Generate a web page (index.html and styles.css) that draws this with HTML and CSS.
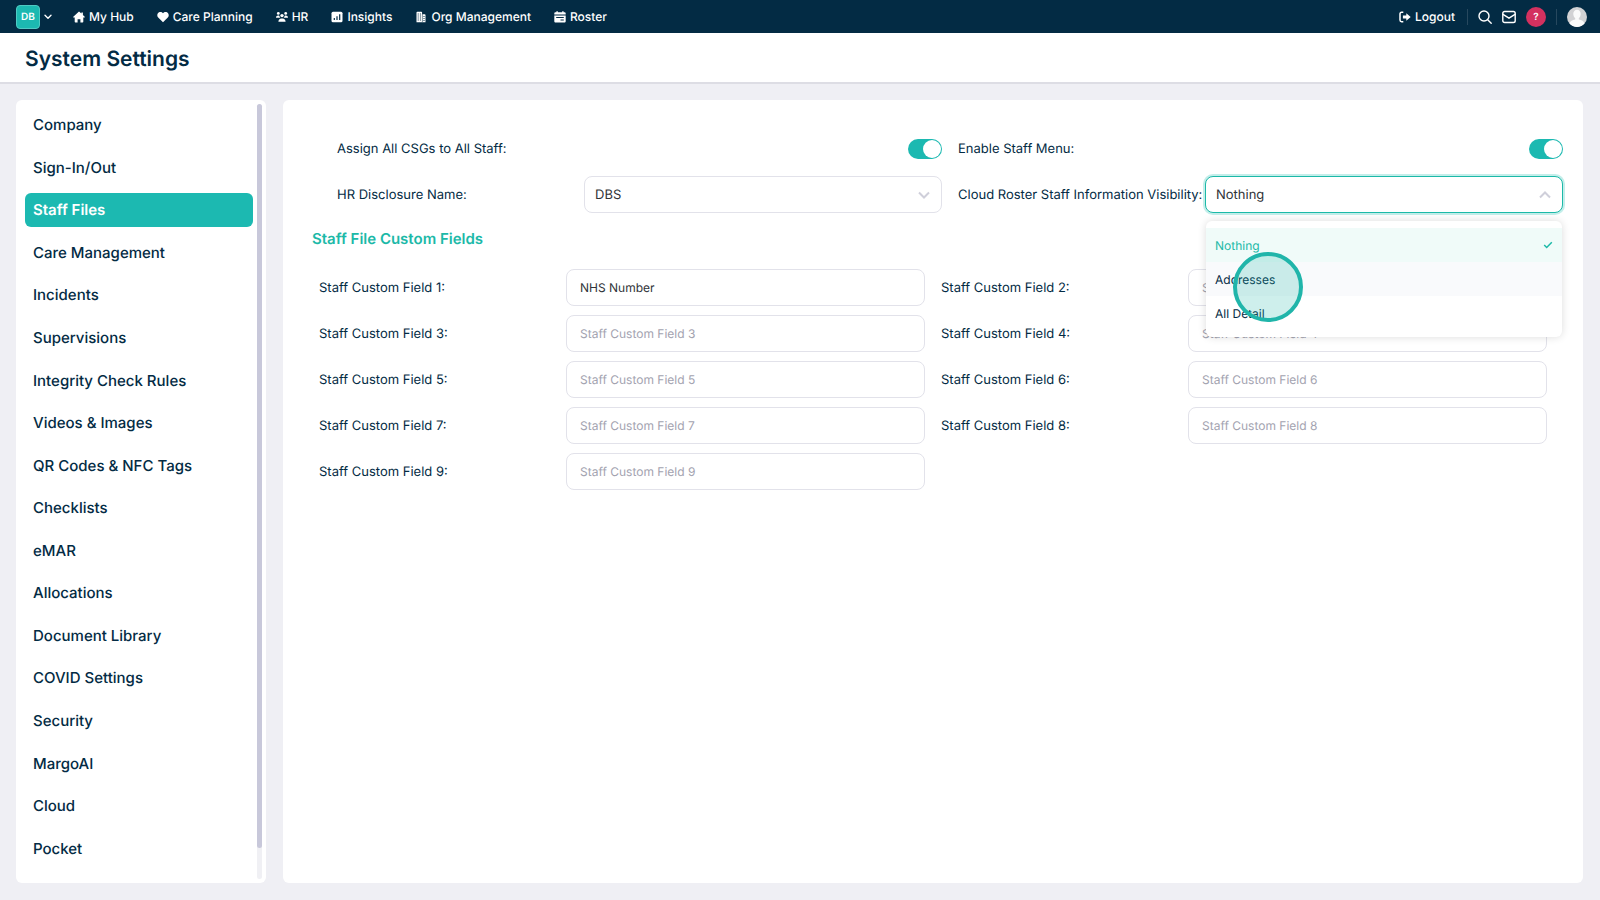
FILE: index.html
```html
<!DOCTYPE html>
<html lang="en">
<head>
    <meta charset="UTF-8">
    <meta name="viewport" content="width=device-width, initial-scale=1.0">
    <title>System Settings</title>
    <link rel="stylesheet" href="styles.css">
</head>
<body>
    <header class="topbar">
        <button type="button" class="org-switch" aria-label="Switch organisation">
            <span class="org-badge">DB</span>
            <svg width="8" height="6" viewBox="0 0 8 6" fill="none" stroke="currentColor" stroke-width="1.4" stroke-linecap="round" stroke-linejoin="round"><path d="M1 1.2l3 3 3-3"/></svg>
        </button>
        <nav class="topnav">
            <a href="#"><svg class="nav-icon" viewBox="0 0 12 12"><path d="M6 .4L.3 5.8c-.3.3-.1.8.3.8h1.1v4.2c0 .4.3.7.7.7h2.2V8.2h2.8v3.3h2.2c.4 0 .7-.3.7-.7V6.6h1.1c.4 0 .6-.5.3-.8L9.9 4V1.5H8.4v1.1z"/></svg>My Hub</a>
            <a href="#"><svg class="nav-icon" viewBox="0 0 12 12"><path d="M6 11.2L1.2 6.5C-.3 5 .1 2.3 1.7 1.4 3.2.5 5 .9 6 2.3 7 .9 8.8.5 10.3 1.4c1.6.9 2 3.6.5 5.1z"/></svg>Care Planning</a>
            <a href="#"><svg class="nav-icon" viewBox="0 0 12 12"><circle cx="2.3" cy="2.4" r="1.4"/><circle cx="9.7" cy="2.4" r="1.4"/><circle cx="6" cy="4.6" r="1.7"/><path d="M0 6.8c0-1.6 1-2.3 2.1-2.3.6 0 1 .1 1.4.4 0 .8.3 1.4.8 1.9zM12 6.8c0-1.6-1-2.3-2.1-2.3-.6 0-1 .1-1.4.4 0 .8-.3 1.4-.8 1.9zM2.4 10.8c0-2 1.3-3.3 2.8-3.3h1.6c1.5 0 2.8 1.3 2.8 3.3z"/></svg>HR</a>
            <a href="#"><svg class="nav-icon" viewBox="0 0 12 12"><rect x=".5" y=".7" width="11" height="10.6" rx="1.5"/><path class="cut" d="M3.3 9V7M6 9V5.2M8.7 9V3.2"/></svg>Insights</a>
            <a href="#"><svg class="nav-icon" viewBox="0 0 12 12"><path d="M1.5 11.2V1.6c0-.5.3-.8.8-.8h4c.5 0 .8.3.8.8v1.6h2.6c.5 0 .8.3.8.8v7.2z"/><path class="cut thin" d="M3.2 2.5v7M5.4 2.5v7M7.4 3.5v7.7M9 5v5"/></svg>Org Management</a>
            <a href="#"><svg class="nav-icon" viewBox="0 0 12 12"><path d="M2.4.3h1.4v1h4.4v-1h1.4v1h.7c.9 0 1.4.5 1.4 1.3v1H.3v-1c0-.8.5-1.3 1.4-1.3h.7zM.3 4.5h11.4v5.7c0 .9-.5 1.4-1.4 1.4H1.7c-.9 0-1.4-.5-1.4-1.4z"/><path class="cut thin-line" d="M2.2 6.5h7.6M6.5 9h3.3"/></svg>Roster</a>
        </nav>
        <div class="topbar-right">
            <a href="#" class="logout"><svg class="nav-icon" viewBox="0 0 12 12"><path d="M4.3 1.3H2.6C1.6 1.3 1 1.9 1 2.9v6.2c0 1 .6 1.6 1.6 1.6h1.7" fill="none" stroke="currentColor" stroke-width="1.5"/><path d="M7.3 2.2L11.7 6 7.3 9.8V7.4H3.9V4.6h3.4z"/></svg>Logout</a>
            <span class="divider"></span>
            <button type="button" class="icon-btn" aria-label="Search"><svg width="14" height="14" viewBox="0 0 14 14"><circle cx="6" cy="6" r="5"/><path d="M9.7 9.7L13.2 13.2"/></svg></button>
            <button type="button" class="icon-btn" aria-label="Messages"><svg width="14" height="14" viewBox="0 0 14 14"><rect x=".8" y="1.5" width="12.4" height="11" rx="1.8"/><path d="M1 4.3l6 3.9 6-3.9"/></svg></button>
            <button type="button" class="help-btn">?</button>
            <span class="divider"></span>
            <button type="button" class="avatar" aria-label="Account">
                <svg width="20" height="20" viewBox="0 0 20 20"><circle cx="10" cy="10" r="10" fill="#d2d2d4"/><path d="M2.5 16.6c.5-2.6 3-3.7 5.7-4.2v-1.2C6.9 10.2 6.3 8.6 6.3 6.8 6.3 4.4 7.8 2.7 10 2.7s3.7 1.7 3.7 4.1c0 1.8-.6 3.4-1.9 4.4v1.2c2.7.5 5.2 1.6 5.7 4.2A10 10 0 0 1 10 20a10 10 0 0 1-7.5-3.4z" fill="#fafafa"/></svg>
            </button>
        </div>
    </header>

    <div class="page-title">
        <h1>System Settings</h1>
    </div>

    <div class="layout">
        <aside class="sidebar">
            <ul class="menu">
                <li><a href="#">Company</a></li>
                <li><a href="#">Sign-In/Out</a></li>
                <li><a href="#" class="active">Staff Files</a></li>
                <li><a href="#">Care Management</a></li>
                <li><a href="#">Incidents</a></li>
                <li><a href="#">Supervisions</a></li>
                <li><a href="#">Integrity Check Rules</a></li>
                <li><a href="#">Videos &amp; Images</a></li>
                <li><a href="#">QR Codes &amp; NFC Tags</a></li>
                <li><a href="#">Checklists</a></li>
                <li><a href="#">eMAR</a></li>
                <li><a href="#">Allocations</a></li>
                <li><a href="#">Document Library</a></li>
                <li><a href="#">COVID Settings</a></li>
                <li><a href="#">Security</a></li>
                <li><a href="#">MargoAI</a></li>
                <li><a href="#">Cloud</a></li>
                <li><a href="#">Pocket</a></li>
            </ul>
            <div class="scrollbar"><div class="scrollbar-thumb"></div></div>
        </aside>

        <main class="panel">
            <form>
                <div class="fields general">
                    <div class="field">
                        <label for="assign">Assign All CSGs to All Staff:</label>
                        <input type="checkbox" class="toggle" id="assign" checked>
                    </div>
                    <div class="field">
                        <label for="staff-menu">Enable Staff Menu:</label>
                        <input type="checkbox" class="toggle" id="staff-menu" checked>
                    </div>
                    <div class="field">
                        <label for="disclosure">HR Disclosure Name:</label>
                        <div class="select-wrap">
                            <select id="disclosure"><option>DBS</option></select>
                            <svg class="chevron" width="12" height="8" viewBox="0 0 12 8"><path d="M1 1.5l5 5 5-5"/></svg>
                        </div>
                    </div>
                    <div class="field">
                        <label for="visibility">Cloud Roster Staff Information Visibility:</label>
                        <div class="select-wrap open">
                            <select id="visibility">
                                <option>Nothing</option>
                                <option>Addresses</option>
                                <option>All Detail</option>
                            </select>
                            <svg class="chevron" width="12" height="8" viewBox="0 0 12 8"><path d="M1 6.5l5-5 5 5"/></svg>
                            <div class="dropdown">
                                <button type="button" class="option selected">Nothing
                                    <svg width="10" height="8" viewBox="0 0 10 8"><path d="M1.2 4l2.5 2.5L8.8 1.3"/></svg>
                                </button>
                                <button type="button" class="option hover">Addresses</button>
                                <button type="button" class="option">All Detail</button>
                                <span class="click-ring"></span>
                            </div>
                        </div>
                    </div>
                </div>

                <h2>Staff File Custom Fields</h2>

                <div class="fields custom">
                    <div class="field">
                        <label for="field1">Staff Custom Field 1:</label>
                        <input type="text" id="field1" placeholder="Staff Custom Field 1" value="NHS Number">
                    </div>
                    <div class="field">
                        <label for="field2">Staff Custom Field 2:</label>
                        <input type="text" id="field2" placeholder="Staff Custom Field 2">
                    </div>
                    <div class="field">
                        <label for="field3">Staff Custom Field 3:</label>
                        <input type="text" id="field3" placeholder="Staff Custom Field 3">
                    </div>
                    <div class="field">
                        <label for="field4">Staff Custom Field 4:</label>
                        <input type="text" id="field4" placeholder="Staff Custom Field 4">
                    </div>
                    <div class="field">
                        <label for="field5">Staff Custom Field 5:</label>
                        <input type="text" id="field5" placeholder="Staff Custom Field 5">
                    </div>
                    <div class="field">
                        <label for="field6">Staff Custom Field 6:</label>
                        <input type="text" id="field6" placeholder="Staff Custom Field 6">
                    </div>
                    <div class="field">
                        <label for="field7">Staff Custom Field 7:</label>
                        <input type="text" id="field7" placeholder="Staff Custom Field 7">
                    </div>
                    <div class="field">
                        <label for="field8">Staff Custom Field 8:</label>
                        <input type="text" id="field8" placeholder="Staff Custom Field 8">
                    </div>
                    <div class="field">
                        <label for="field9">Staff Custom Field 9:</label>
                        <input type="text" id="field9" placeholder="Staff Custom Field 9">
                    </div>
                </div>
            </form>
        </main>
    </div>
</body>
</html>
```
FILE: styles.css
```css
* {
    box-sizing: border-box;
}

body {
    margin: 0;
    min-height: 100vh;
    display: flex;
    flex-direction: column;
    font-family: Inter, "Liberation Sans", sans-serif;
    font-size: 13px;
    text-rendering: geometricPrecision;
    color: #032b44;
    background-color: #efeff4;
}

button,
input,
select {
    font: inherit;
    color: inherit;
    text-rendering: inherit;
}

button {
    padding: 0;
    border: none;
    background: none;
    cursor: pointer;
}

a {
    color: inherit;
    text-decoration: none;
}

svg {
    display: block;
    flex: none;
}

/* Top bar */
.topbar {
    display: flex;
    align-items: center;
    height: 33px;
    padding: 0 13px 0 16px;
    background-color: #032b44;
    color: #fff;
    font-size: 12px;
    font-weight: 500;
}

.org-switch {
    display: flex;
    align-items: center;
    gap: 4px;
    margin-right: 21px;
    color: #fff;
}

.org-badge {
    width: 24px;
    height: 24px;
    border: 1px solid #4fcac3;
    border-radius: 4px;
    background-color: #1cb9b1;
    font-size: 10px;
    font-weight: 600;
    line-height: 22px;
    text-align: center;
}

.topnav {
    display: flex;
    gap: 23px;
}

.topnav a,
.logout {
    display: flex;
    align-items: center;
    gap: 4px;
}

.logout {
    margin-right: 2px;
}

.nav-icon {
    width: 12px;
    height: 12px;
    fill: currentColor;
}

.nav-icon .cut {
    fill: none;
    stroke: #032b44;
    stroke-width: 1.2;
}

.nav-icon .thin {
    stroke-width: 1;
    stroke-dasharray: 1 1;
}

.nav-icon .thin-line {
    stroke-width: 1;
}

.topbar-right {
    display: flex;
    align-items: center;
    gap: 10px;
    margin-left: auto;
}

.divider {
    width: 1px;
    height: 16px;
    background-color: #27485e;
}

.icon-btn svg {
    fill: none;
    stroke: #fff;
    stroke-width: 1.4;
    stroke-linecap: round;
}

.help-btn {
    width: 20px;
    height: 20px;
    border-radius: 50%;
    background-color: #d3315f;
    color: #fff;
    font-size: 10px;
    font-weight: 600;
}

/* Page title */
.page-title {
    padding: 13px 25px 9px;
    background-color: #fff;
    border-bottom: 2px solid #dddde4;
}

.page-title h1 {
    margin: 0;
    font-size: 21px;
    font-weight: 600;
    line-height: 27px;
}

/* Layout */
.layout {
    flex: 1;
    display: flex;
    gap: 17px;
    padding: 16px 17px 17px 16px;
}

.sidebar,
.panel {
    background-color: #fff;
    border-radius: 6px;
}

.sidebar {
    display: flex;
    gap: 4px;
    width: 250px;
    padding: 4px 4px 4px 9px;
}

.menu {
    flex: 1;
    display: grid;
    grid-auto-rows: 1fr;
    align-items: center;
    margin: 0 0 9px;
    padding: 0;
    list-style: none;
}

.menu a {
    display: block;
    padding: 0 8px;
    border-radius: 6px;
    font-size: 15px;
    font-weight: 500;
    line-height: 34px;
}

.menu a.active {
    background-color: #1cb9b1;
    color: #fff;
    font-weight: 600;
}

.scrollbar {
    width: 5px;
    border-radius: 3px;
    background-color: #f0f0f4;
}

.scrollbar-thumb {
    height: 96%;
    border-radius: 3px;
    background-color: #c8c8da;
}

.panel {
    flex: 1;
    padding: 30px 20px;
}

/* Form */
.fields {
    display: grid;
    grid-template-columns: 1fr 1fr;
    gap: 9px 16px;
}

.general {
    padding-left: 34px;
}

.custom {
    padding: 0 16px;
}

.field {
    display: grid;
    grid-template-columns: 247px 1fr;
    align-items: center;
    min-height: 37px;
}

.field label {
    font-weight: 400;
    white-space: nowrap;
}

.panel h2 {
    margin: 15px 0 19px 9px;
    color: #1cb9a8;
    font-size: 15px;
    font-weight: 600;
    line-height: 22px;
}

input[type="text"],
select {
    width: 100%;
    height: 37px;
    border: 1px solid #e2e2ea;
    border-radius: 8px;
    background-color: #fff;
    color: #303338;
    outline: none;
}

input[type="text"] {
    padding: 0 13px;
    font-size: 12px;
}

input::placeholder {
    color: #a3a3b0;
}

.select-wrap {
    position: relative;
}

select {
    display: block;
    appearance: none;
    padding: 0 32px 0 10px;
}

.chevron {
    position: absolute;
    top: 15px;
    right: 12px;
    fill: none;
    stroke: #cfcfda;
    stroke-width: 2;
    pointer-events: none;
}

.open select {
    border-color: #1cb9a8;
    box-shadow: 0 0 0 2px #c3eeea;
}

.toggle {
    justify-self: end;
    appearance: none;
    display: flex;
    justify-content: flex-end;
    width: 34px;
    height: 20px;
    margin: 0;
    padding: 1px;
    border-radius: 10px;
    background-color: #1cb9b1;
    cursor: pointer;
}

.toggle::before {
    content: "";
    width: 18px;
    height: 18px;
    border-radius: 50%;
    background-color: #fff;
}

.dropdown {
    position: absolute;
    z-index: 1;
    top: 45px;
    left: 1px;
    right: 1px;
    padding: 7px 0;
    border-radius: 6px;
    background-color: #fff;
    box-shadow: 0 0 8px rgba(0, 0, 0, 0.14);
}

.option {
    display: flex;
    justify-content: space-between;
    align-items: center;
    width: 100%;
    height: 34px;
    padding: 0 9px;
    font-size: 12px;
}

.option svg {
    fill: none;
    stroke: currentColor;
    stroke-width: 1.5;
}

.option.selected {
    background-color: #f0fbf9;
    color: #1cb9a8;
}

.option.hover {
    background-color: #f9fafc;
}

.click-ring {
    position: absolute;
    top: 31px;
    left: 27px;
    width: 70px;
    height: 70px;
    border: 4px solid #20b5aa;
    border-radius: 50%;
    background-color: rgba(32, 181, 170, 0.22);
    pointer-events: none;
}
```
